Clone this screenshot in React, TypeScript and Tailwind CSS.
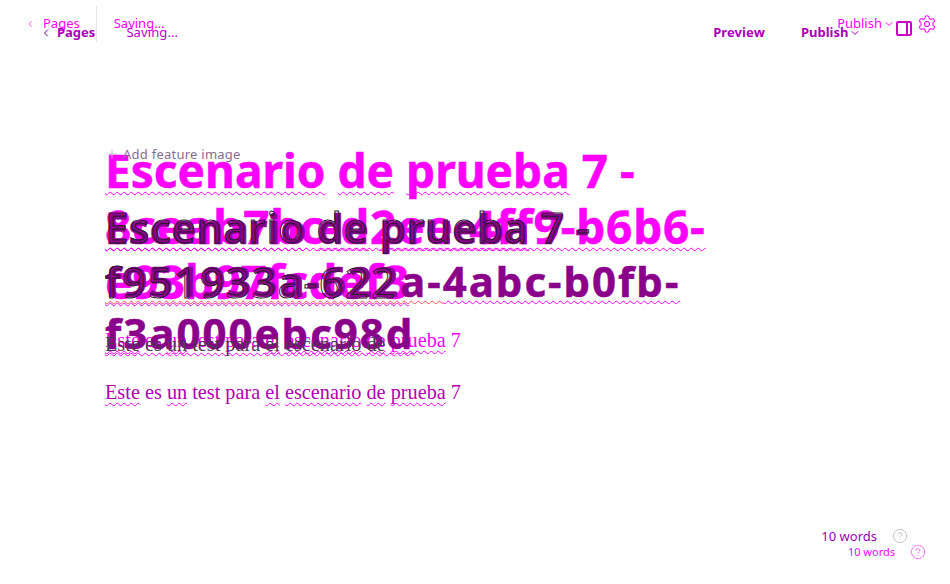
import { ChevronDown, ChevronLeft, CircleHelp, Plus, Settings } from "lucide-react";

const sans = "font-['Noto_Sans','Open_Sans',sans-serif]";
const serif = "font-['Liberation_Serif',serif]";
const wavy = "underline decoration-wavy decoration-1 decoration-[#ff00ff] underline-offset-[3px] [text-decoration-skip-ink:none]";
const wavyRed = "underline decoration-wavy decoration-1 decoration-[#ff5050] underline-offset-[3px] [text-decoration-skip-ink:none]";

// words with a spelling squiggle under them
const Word = ({ children }: { children: string }) => <span className={wavy}>{children}</span>;

const Sentence = () => (
  <>
    <Word>Este</Word> es <Word>un</Word> test para <Word>el</Word> <Word>escenario</Word> <Word>de</Word>{" "}
    <Word>prueba</Word> 7
  </>
);

const PanelIcon = () => (
  <svg width="16" height="15" viewBox="0 0 16 15" fill="none" stroke="#c800c8" strokeWidth="2">
    <rect x="1" y="1" width="14" height="13" rx="1" />
    <path d="M11 1v13" />
  </svg>
);

export default function App() {
  return (
    <div className="relative h-[584px] w-[950px] overflow-hidden bg-white">
      {/* bottom layer, bright magenta and a little higher up */}
      <div className={`flex h-full flex-col text-[#ff00ff] ${sans}`}>
        <header className="flex h-12 items-center pl-[25px] pr-[13px]">
          <ChevronLeft size={10} strokeWidth={1.5} />
          <span className="ml-[8px] text-[13px]">Pages</span>
          <div className="ml-[16px] h-9 w-px bg-[#dfe5f0]" />
          <span className="ml-[17px] text-[13px]">Saving...</span>
          <span className="ml-auto text-[13px]">Publish</span>
          <ChevronDown size={12} className="ml-[1px]" />
          <div className="ml-[1px] mt-2">
            <PanelIcon />
          </div>
          <Settings size={20} strokeWidth={1.25} className="ml-[5px]" />
        </header>
        <main className="pl-[105px] pt-[95px]">
          <h1 className="text-[46px] font-bold leading-[55.5px] [-webkit-text-stroke:0.5px]">
            <span className="block">
              <Word>Escenario</Word> <Word>de</Word> <Word>prueba</Word> 7 -
            </span>
            <span className="block tracking-[0.8px]">
              <Word>8ceab7bc-d2ee-4ff9-b6b6-</Word>
            </span>
            <span className="block">
              <Word>e93b97fcdef3</Word>
            </span>
          </h1>
          <p className={`mt-[15px] text-[20.25px] ${serif}`}>
            <Sentence />
          </p>
        </main>
        <footer className="mt-auto flex items-center justify-end pb-[24px] pr-[24px] text-[11px]">
          <span>10 words</span>
          <CircleHelp size={16} strokeWidth={1} strokeDasharray="3 2" className="ml-[15px]" />
        </footer>
      </div>

      {/* purple layer, shifted down by a few pixels */}
      <div className={`absolute inset-0 flex flex-col text-[#8b008b] ${sans}`}>
        <header className="flex h-[66px] items-center pl-[40px] text-[13px] text-[#a800b8]">
          <ChevronLeft size={12} strokeWidth={2} className="text-[#7a0090]" />
          <span className="ml-[5px] font-bold">Pages</span>
          <span className="ml-[31px] tracking-[0.1px] text-[#c000d0]">Saving...</span>
          <span className="ml-[535px] font-bold tracking-[0.1px]">Preview</span>
          <span className="ml-[36px] font-bold">Publish</span>
          <ChevronDown size={12} className="ml-[1px]" />
        </header>
        <main className="pl-[105px] pt-[136px]">
          <h1 className="text-[42px] font-bold leading-[52.5px] [-webkit-text-stroke:0.5px]">
            <span className="block">
              <Word>Escenario</Word> <Word>de</Word> <Word>prueba</Word> 7 -
            </span>
            <span className="block tracking-[2px]">
              <span className={wavyRed}>f951933a-622a-</span>
              <Word>4abc-b0fb-</Word>
            </span>
            <span className="block tracking-[2px]">
              <Word>f3a000ebc98d</Word>
            </span>
          </h1>
          <p className={`mt-[17px] text-[20.25px] text-[#b000b0] ${serif}`}>
            <Sentence />
          </p>
        </main>
        <footer className="mt-auto flex items-center justify-end pb-[38px] pr-[42px] text-[13px] text-[#9a00b0]">
          <span>10 words</span>
          <CircleHelp size={16} strokeWidth={1} className="ml-[15px] text-[#b0a0b0]" />
        </footer>
      </div>

      {/* thin dark layer over the top of the headings */}
      <div className={`absolute inset-0 pl-[105px] pt-[146px] ${sans}`}>
        <div className="flex items-center text-[13px] leading-4 tracking-[0.25px] text-[#8a6a9a]">
          <Plus size={14} strokeWidth={1.5} className="text-[#bbbbbb]" />
          <span className="ml-[4px]">Add feature image</span>
        </div>
        <div className="mt-[37px] text-[42px] leading-[55px] text-transparent [-webkit-text-stroke:1px_#2a1a30]">
          <div className="tracking-[1px]">Escenario de prueba 7 -</div>
          <div className="tracking-[2px]">f951933a-622</div>
        </div>
        <p className={`mt-[20px] text-[20.25px] text-[#553355] ${serif}`}>Este es un test para el escenario de</p>
      </div>
    </div>
  );
}
